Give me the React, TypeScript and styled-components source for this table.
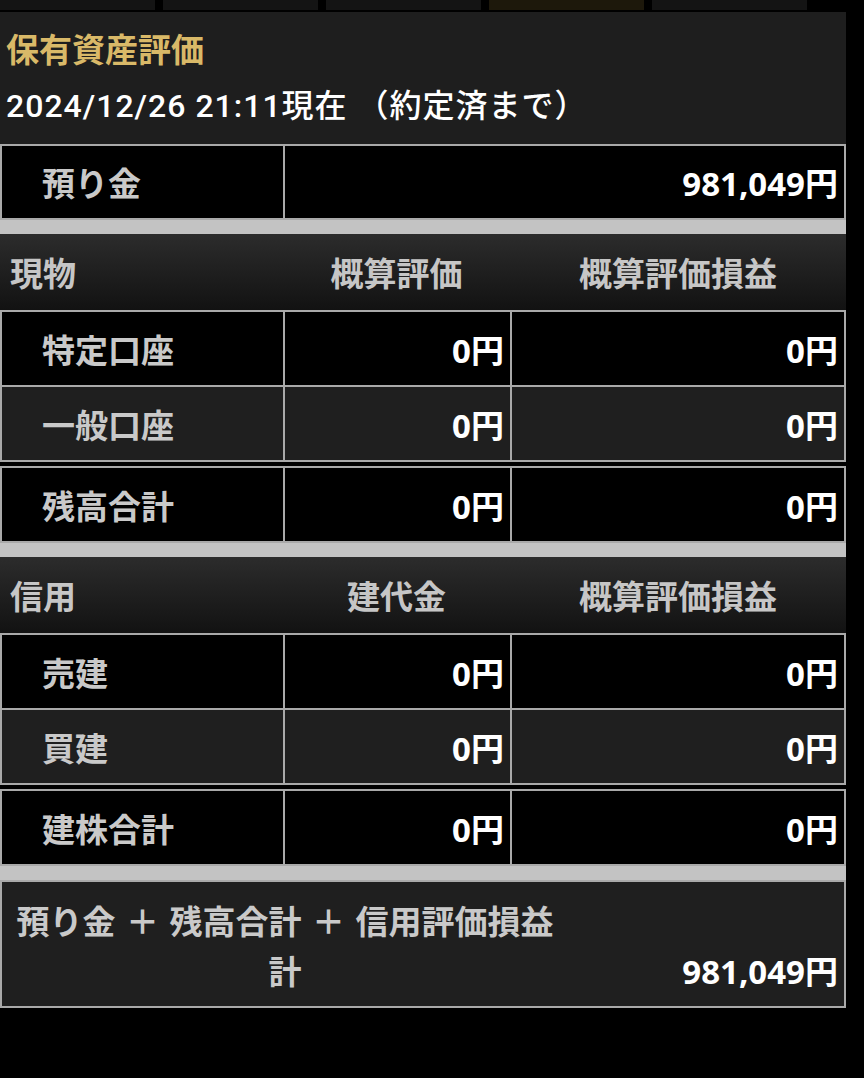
import React from "react";
import styled, { createGlobalStyle } from "styled-components";

const BORDER = "#a9a9a9";

const GlobalStyle = createGlobalStyle`
  html, body { margin: 0; padding: 0; background: #000; }
  body { font-family: "Noto Sans", "Noto Sans CJK JP", sans-serif; }
`;

const Page = styled.div`
  width: 864px;
  min-height: 1078px;
  background: #000;
`;

const TabStrip = styled.div`
  display: flex;
  gap: 8px;
  height: 10px;
  margin-bottom: 2px;
`;

const Tab = styled.div<{ $active?: boolean }>`
  width: 155px;
  background: ${(p) => (p.$active ? "#1d180b" : "#141414")};
`;

const Panel = styled.section`
  width: 846px;
  background: #1e1e1e;
  display: flex;
  flex-direction: column;
`;

const Heading = styled.header`
  padding: 14px 6px 16px;
  display: flex;
  flex-direction: column;
  gap: 14px;
`;

const Title = styled.h1`
  margin: 0;
  font: 700 33px/44px "Noto Sans CJK JP", sans-serif;
  color: #d9b968;
`;

const Stamp = styled.div`
  font: 500 32px/44px Roboto, "Noto Sans CJK JP", sans-serif;
  letter-spacing: 1px;
  color: #ffffff;
`;

const Table = styled.div`
  border: 2px solid ${BORDER};
  display: flex;
  flex-direction: column;
`;

const Row = styled.div<{ $cols: 2 | 3; $tone: "black" | "dark" }>`
  display: grid;
  grid-template-columns: ${(p) => (p.$cols === 2 ? "281px 1fr" : "281px 227px 1fr")};
  height: ${(p) => (p.$cols === 2 ? "72px" : "73px")};
  background: ${(p) => (p.$tone === "black" ? "#000" : "#1f1f1f")};
  & + & {
    border-top: 2px solid ${BORDER};
  }
`;

const LabelCell = styled.div`
  display: flex;
  align-items: center;
  padding-left: 40px;
  color: #c9c9c9;
  font: 700 33px "Noto Sans CJK JP", sans-serif;
`;

const ValueCell = styled.div`
  display: flex;
  align-items: center;
  justify-content: flex-end;
  padding-right: 6px;
  border-left: 2px solid ${BORDER};
  color: #ffffff;
  font: 700 33px "Noto Sans", "Noto Sans CJK JP", sans-serif;
`;

const SectionBar = styled.div`
  height: 14px;
  background: #c3c3c3;
`;

const BlackGap = styled.div`
  height: 4px;
  background: #000;
`;

const HeaderRow = styled.div`
  display: grid;
  grid-template-columns: 283px 227px 1fr;
  height: 76px;
  background: linear-gradient(#2c2c2c, #121212);
  color: #c6c6c6;
  font: 700 33px "Noto Sans CJK JP", sans-serif;
`;

const HeadCell = styled.div<{ $align: "left" | "center" }>`
  display: flex;
  align-items: center;
  justify-content: ${(p) => (p.$align === "left" ? "flex-start" : "center")};
  padding-left: ${(p) => (p.$align === "left" ? "10px" : "0")};
`;

const TotalRow = styled.div`
  display: flex;
  align-items: flex-end;
  background: #1f1f1f;
  height: 124px;
  box-sizing: border-box;
  padding: 13px 6px 9px 0;
`;

const TotalLabel = styled.div`
  width: 566px;
  text-align: center;
  color: #c9c9c9;
  font: 700 33px/50px "Noto Sans CJK JP", sans-serif;
  word-spacing: 3px;
  align-self: flex-start;
`;

const TotalValue = styled.div`
  flex: 1;
  text-align: right;
  color: #ffffff;
  font: 700 33px/50px "Noto Sans", "Noto Sans CJK JP", sans-serif;
`;

type Line = { label: string; values: string[] };

const Block = ({ rows }: { rows: Line[] }) => (
  <Table>
    {rows.map((r, i) => (
      <Row key={r.label} $cols={r.values.length === 1 ? 2 : 3} $tone={i % 2 === 0 ? "black" : "dark"}>
        <LabelCell>{r.label}</LabelCell>
        {r.values.map((v, j) => (
          <ValueCell key={j}>{v}</ValueCell>
        ))}
      </Row>
    ))}
  </Table>
);

const Header = ({ cols }: { cols: string[] }) => (
  <HeaderRow>
    <HeadCell $align="left">{cols[0]}</HeadCell>
    <HeadCell $align="center">{cols[1]}</HeadCell>
    <HeadCell $align="center">{cols[2]}</HeadCell>
  </HeaderRow>
);

export default function App() {
  return (
    <Page>
      <GlobalStyle />
      <TabStrip>
        <Tab />
        <Tab />
        <Tab />
        <Tab $active />
        <Tab />
      </TabStrip>
      <Panel>
        <Heading>
          <Title>保有資産評価</Title>
          <Stamp>2024/12/26 21:11現在 （約定済まで）</Stamp>
        </Heading>

        <Block rows={[{ label: "預り金", values: ["981,049円"] }]} />
        <SectionBar />
        <Header cols={["現物", "概算評価", "概算評価損益"]} />
        <Block
          rows={[
            { label: "特定口座", values: ["0円", "0円"] },
            { label: "一般口座", values: ["0円", "0円"] },
          ]}
        />
        <BlackGap />
        <Block rows={[{ label: "残高合計", values: ["0円", "0円"] }]} />
        <SectionBar />
        <Header cols={["信用", "建代金", "概算評価損益"]} />
        <Block
          rows={[
            { label: "売建", values: ["0円", "0円"] },
            { label: "買建", values: ["0円", "0円"] },
          ]}
        />
        <BlackGap />
        <Block rows={[{ label: "建株合計", values: ["0円", "0円"] }]} />
        <SectionBar />
        <Table>
          <TotalRow>
            <TotalLabel>
              預り金 ＋ 残高合計 ＋ 信用評価損益
              <br />計
            </TotalLabel>
            <TotalValue>981,049円</TotalValue>
          </TotalRow>
        </Table>
      </Panel>
    </Page>
  );
}
